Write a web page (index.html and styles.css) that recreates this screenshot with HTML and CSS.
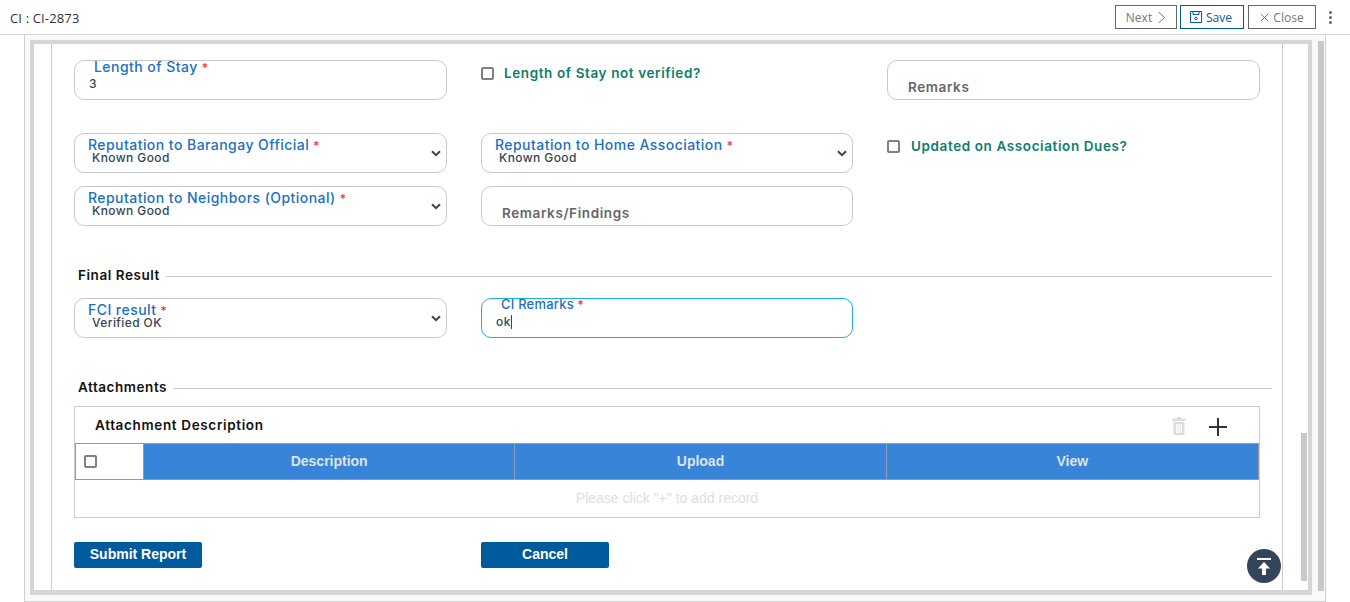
FILE: index.html
```html
<!DOCTYPE html>
<html>
<head>
	<meta charset="utf-8">
	<meta name="viewport" content="width=device-width, initial-scale=1">
	<title>CI : CI-2873</title>
	<link rel="stylesheet" href="styles.css">
</head>
<body>
	<div class="topbar">
		<div class="topbar_title">CI : CI-2873</div>
		<div class="topbar_actions">
			<button type="button" class="top_btn btn_next">Next
				<svg width="9" height="13" viewBox="0 0 9 13"><path d="M1.5 1l6 5.5-6 5.5" fill="none" stroke="#777" stroke-width="1"/></svg>
			</button>
			<button type="button" class="top_btn btn_save">
				<svg width="12" height="12" viewBox="0 0 12 12"><path d="M.5.5h11v11H.5zM3 .5v3h6v-3" fill="none" stroke="#005a9e"/><circle cx="6" cy="7.5" r="1.3" fill="none" stroke="#005a9e"/></svg>
				Save
			</button>
			<button type="button" class="top_btn btn_close">
				<svg width="9" height="9" viewBox="0 0 9 9"><path d="M.8.8l7.4 7.4M8.2.8L.8 8.2" fill="none" stroke="#777"/></svg>
				Close
			</button>
			<div class="kebab"><span></span><span></span><span></span></div>
		</div>
	</div>

	<div class="page">
		<div class="frame">
			<div class="content">
				<div class="form_row row_first">
					<div class="field field_input">
						<label>Length of Stay <b>*</b></label>
						<div class="value">3</div>
					</div>
					<div class="check_item check_stay"><span class="checkbox"></span>Length of Stay not verified?</div>
					<div class="field field_note"><span>Remarks</span></div>
				</div>

				<div class="form_row row_second">
					<div class="field field_select">
						<label>Reputation to Barangay Official <b>*</b></label>
						<div class="value">Known Good</div>
						<svg class="chevron" width="10" height="7" viewBox="0 0 10 7"><path d="M1 1.200l4 4 4-4" fill="none" stroke="#34455a" stroke-width="2"/></svg>
					</div>
					<div class="field field_select">
						<label>Reputation to Home Association <b>*</b></label>
						<div class="value">Known Good</div>
						<svg class="chevron" width="10" height="7" viewBox="0 0 10 7"><path d="M1 1.200l4 4 4-4" fill="none" stroke="#34455a" stroke-width="2"/></svg>
					</div>
					<div class="check_item check_dues"><span class="checkbox"></span>Updated on Association Dues?</div>
				</div>

				<div class="form_row row_third">
					<div class="field field_select">
						<label>Reputation to Neighbors (Optional) <b>*</b></label>
						<div class="value">Known Good</div>
						<svg class="chevron" width="10" height="7" viewBox="0 0 10 7"><path d="M1 1.200l4 4 4-4" fill="none" stroke="#34455a" stroke-width="2"/></svg>
					</div>
					<div class="field field_note"><span>Remarks/Findings</span></div>
				</div>

				<div class="section_title title_result"><span>Final Result</span></div>
				<div class="form_row">
					<div class="field field_select">
						<label>FCI result <b>*</b></label>
						<div class="value">Verified OK</div>
						<svg class="chevron" width="10" height="7" viewBox="0 0 10 7"><path d="M1 1.200l4 4 4-4" fill="none" stroke="#34455a" stroke-width="2"/></svg>
					</div>
					<div class="field field_input field_focus">
						<label>CI Remarks <b>*</b></label>
						<div class="value">ok<i class="caret"></i></div>
					</div>
				</div>

				<div class="section_title title_attach"><span>Attachments</span></div>
				<div class="attach_box">
					<div class="attach_head">
						<div class="attach_title">Attachment Description</div>
						<svg class="icon_trash" width="14" height="18" viewBox="0 0 14 18"><path d="M5 0h4v1.500h4.500V4H.5V1.500H5zM1.500 5h11v13h-11zM4.200 7v9h1.300V7zM6.400 7v9h1.300V7zM8.600 7v9h1.300V7z" fill="#dcdcdc" fill-rule="evenodd"/></svg>
						<svg class="icon_plus" width="18" height="18" viewBox="0 0 18 18"><path d="M9 0v18M0 9h18" fill="none" stroke="#333" stroke-width="2"/></svg>
					</div>
					<div class="attach_cols">
						<div class="col_check"><span class="checkbox"></span></div>
						<div class="col_name">Description</div>
						<div class="col_name">Upload</div>
						<div class="col_name">View</div>
					</div>
					<div class="attach_empty">Please click "+" to add record</div>
				</div>

				<div class="form_row row_buttons">
					<div><button type="button" class="main_btn">Submit Report</button></div>
					<div><button type="button" class="main_btn">Cancel</button></div>
				</div>
			</div>
			<div class="inner_track"><div class="inner_thumb"></div></div>
			<div class="to_top">
				<svg width="14" height="17" viewBox="0 0 14 17"><path d="M0 0h14v2H0zM7 4l6 6.500H9V17H5v-6.500H1z" fill="#fff"/></svg>
			</div>
		</div>
		<div class="outer_track"></div>
	</div>
</body>
</html>
```

FILE: styles.css
```css
* {
	box-sizing: border-box;
}

html, body {
	margin: 0;
	height: 602px;
	overflow: hidden;
	background-color: #fff;
	font-family: "Inter", sans-serif;
}

/* top bar */
.topbar {
	display: flex;
	justify-content: space-between;
	align-items: flex-start;
	height: 35px;
	padding: 5px 0 0 10px;
	border-bottom: 1px solid #d4d4d4;
}

.topbar_title {
	font-family: "Open Sans", sans-serif;
	font-size: 13px;
	font-weight: 500;
	letter-spacing: 0.15px;
	line-height: 26px;
	color: #333;
}

.topbar_actions {
	display: flex;
}

.top_btn {
	display: flex;
	align-items: center;
	justify-content: center;
	gap: 4px;
	height: 24px;
	padding: 0;
	background: #fff;
	border: 1px solid #666;
	font-family: "Open Sans", sans-serif;
	font-size: 12px;
	color: #777;
}

.btn_next {
	width: 62px;
	gap: 5px;
}

.btn_save {
	width: 64px;
	margin-left: 3px;
	padding-right: 2px;
	border-color: #005a9e;
	color: #005a9e;
}

.btn_close {
	width: 68px;
	margin-left: 4px;
}

.kebab {
	display: flex;
	flex-direction: column;
	gap: 2px;
	width: 3px;
	margin: 6px 18px 0 13px;
}

.kebab span {
	width: 3px;
	height: 3px;
	border-radius: 50%;
	background-color: #666;
}

/* page frame */
.page {
	display: flex;
	align-items: flex-start;
	width: 1302px;
	height: 567px;
	margin-left: 24px;
	padding: 5px 0 0 5px;
	background-color: #f8f9fb;
	border-left: 1px solid #d0d0d0;
	border-right: 1px solid #d0d0d0;
	border-bottom: 1px solid #d4d4d4;
}

.frame {
	position: relative;
	display: flex;
	flex: none;
	width: 1282px;
	height: 555px;
	background-color: #fff;
	border: 4px solid #d5d5d5;
	border-bottom-width: 5px;
}

.content {
	flex: none;
	width: 1232px;
	height: 546px;
	margin-left: 17px;
	padding: 16px 0 0 22px;
	overflow: hidden;
	background-color: #fff;
	border-left: 1px solid #ccc;
	border-right: 1px solid #ccc;
}

.inner_track {
	flex: 1;
	padding: 389px 1px 0 18px;
	background-color: #fff;
}

.inner_thumb {
	height: 148px;
	background-color: #c8c8c8;
}

.outer_track {
	flex: none;
	width: 6px;
	height: 550px;
	margin: 1px 0 0 6px;
	background-color: #c8c8c8;
}

.to_top {
	position: absolute;
	left: 1213px;
	top: 505px;
	display: flex;
	align-items: center;
	justify-content: center;
	width: 34px;
	height: 34px;
	border-radius: 50%;
	background-color: #34455a;
}

/* form rows */
.form_row {
	display: grid;
	grid-template-columns: 373px 372px 373px;
	column-gap: 34px;
	width: 1186px;
}

.row_second {
	margin-top: 33px;
}

.row_third {
	margin-top: 13px;
}

.field {
	position: relative;
	height: 40px;
	background-color: #fff;
	border: 1px solid #c9c9c9;
	border-radius: 10px;
}

.field label {
	display: block;
	font-size: 14px;
	font-weight: 500;
	letter-spacing: 0.45px;
	line-height: 16px;
	color: #1a70c4;
}

.field label b {
	font-size: 12px;
	font-weight: 500;
	line-height: 0;
	color: #f0343c;
}

.field .value {
	font-size: 12px;
	font-weight: 500;
	letter-spacing: 0.4px;
	line-height: 13px;
	color: #34455a;
}

.field_input {
	padding: 0 0 0 14px;
}

.field_input label {
	margin-top: -2px;
	padding: 0 0 0 5px;
}

.field_input .value {
	margin-top: 2px;
	line-height: 14px;
}

.field_select label {
	margin-top: 3px;
	padding-left: 13px;
}

.field_select .value {
	padding-left: 17px;
	margin-top: -2px;
}

.field_focus {
	border-color: #14b1ec;
}

.field_focus label {
	margin-top: -3px;
	font-size: 13px;
	letter-spacing: 0.2px;
}

.field_focus .value {
	margin-top: 3px;
}

.caret {
	display: inline-block;
	width: 1px;
	height: 14px;
	vertical-align: -3px;
	background-color: #34455a;
}

.chevron {
	position: absolute;
	right: 5px;
	top: 16px;
}

.field_note {
	padding: 18px 0 0 20px;
	font-size: 13.5px;
	font-weight: 600;
	letter-spacing: 0.6px;
	line-height: 16px;
	color: #666;
}

.check_item {
	display: flex;
	align-items: center;
	gap: 10px;
	height: 18px;
	margin-top: 4px;
	font-size: 13.5px;
	font-weight: 600;
	letter-spacing: 0.6px;
	color: #0f7d6b;
}

.check_dues {
	gap: 11px;
}

.checkbox {
	display: block;
	flex: none;
	width: 13px;
	height: 13px;
	background-color: #fff;
	border: 2px solid #808080;
	border-radius: 2px;
}

/* section titles */
.section_title {
	display: flex;
	align-items: center;
	gap: 6px;
	width: 1198px;
	height: 20px;
	padding-left: 4px;
	font-size: 13.5px;
	font-weight: 600;
	letter-spacing: 0.55px;
	color: #111;
}

.section_title span {
	margin-bottom: 2px;
}

.section_title::after {
	content: "";
	flex: 1;
	height: 1px;
	background-color: #ccc;
}

.title_result {
	margin-top: 40px;
	margin-bottom: 12px;
}

.title_attach {
	margin-top: 40px;
	margin-bottom: 8px;
}

/* attachment table */
.attach_box {
	width: 1186px;
	height: 112px;
	border: 1px solid #ccc;
}

.attach_head {
	display: flex;
	align-items: center;
	height: 36px;
	padding-left: 20px;
}

.attach_title {
	flex: 1;
	font-size: 13.5px;
	font-weight: 600;
	letter-spacing: 0.65px;
	color: #111;
}

.icon_trash {
	margin-top: 2px;
}

.icon_plus {
	margin: 4px 32px 0 23px;
}

.attach_cols {
	display: grid;
	grid-template-columns: 68px 1fr 1fr 1fr;
	height: 37px;
	background-color: #3784d9;
	border: 1px solid #999;
}

.col_check {
	display: flex;
	align-items: center;
	padding-left: 8px;
	background-color: #fff;
	border-right: 1px solid #999;
}

.col_name {
	display: flex;
	align-items: center;
	justify-content: center;
	padding-bottom: 2px;
	border-right: 1px solid #8a9fb8;
	font-family: "Liberation Sans", sans-serif;
	font-size: 14px;
	font-weight: 700;
	color: #dfe3e8;
}

.col_name:last-child {
	border-right: none;
}

.attach_empty {
	height: 37px;
	font-family: "Liberation Sans", sans-serif;
	font-size: 14px;
	line-height: 37px;
	text-align: center;
	color: #dedede;
}

/* buttons */
.row_buttons {
	margin-top: 24px;
}

.main_btn {
	display: block;
	width: 128px;
	height: 26px;
	padding: 0 0 2px;
	background-color: #005a9e;
	border: none;
	border-radius: 2px;
	font-family: "Liberation Sans", sans-serif;
	font-size: 14px;
	font-weight: 700;
	color: #fff;
}
```
